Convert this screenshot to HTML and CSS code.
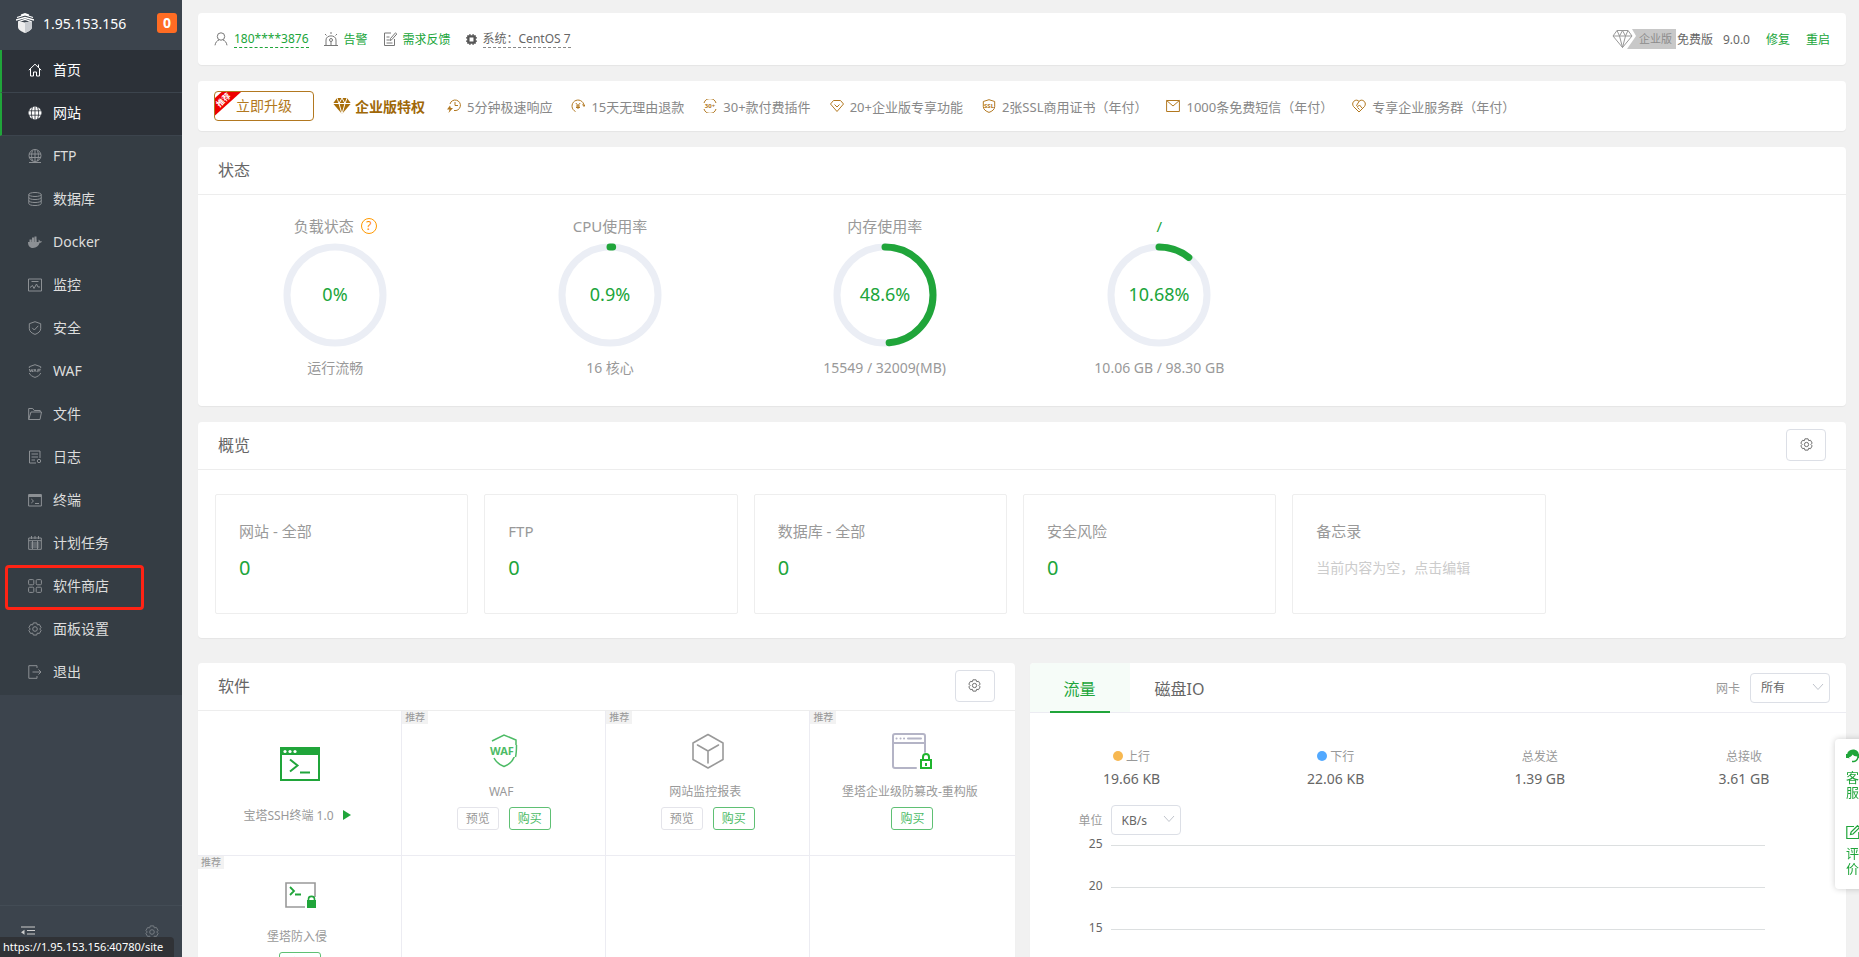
FILE: index.html
```html
<!DOCTYPE html>
<html lang="zh-CN">

<head>
    <meta charset="UTF-8">
    <meta name="viewport" content="width=device-width, initial-scale=1.0">
    <title>首页</title>
    <link rel="stylesheet" href="styles.css">
</head>

<body>

    <!-- Shared icons -->
    <svg class="sprite" aria-hidden="true">
        <symbol id="i-gear" viewBox="0 0 14 14">
            <path stroke-linejoin="round" d="M5.3.9h3.4l.65 2 2-.45 1.75 3L11.7 7l1.4 1.5-1.75 3-2-.45-.65 2H5.3l-.65-2-2 .45-1.75-3L2.3 7 .9 5.500l1.75-3 2 .45z" />
            <circle cx="7" cy="7" r="2.300" />
        </symbol>
        <symbol id="i-chevron" viewBox="0 0 12 12">
            <path d="M1 3l5 5.500L11 3" />
        </symbol>
    </svg>

    <div class="app">

        <aside class="sidebar">
            <header class="sidebar-header">
                <svg class="logo" viewBox="0 0 18 20">
                    <path fill="#eee" d="M2 8l7 1.500L16 8v6c0 3-3.500 4.500-7 6-3.500-1.500-7-3-7-6z" />
                    <path fill="#c9ccd0" d="M9 9.500L16 8v6c0 3-3.500 4.500-7 6z" />
                    <path fill="none" stroke="#fff" stroke-width="1.300" d="M1 4.500L9 2l8 2.500M0 7l9-2.500L18 7M5 2.200L9 .8l4 1.400M3 8.500l6-2 6 2" />
                </svg>
                <span class="server-ip">1.95.153.156</span>
                <span class="msg-count">0</span>
            </header>

            <nav class="menu">
                <a class="menu-item active" href="#">
                    <svg viewBox="0 0 14 14"><path d="M.8 7.200L7 1.200l6.200 6M2.500 6v7h3V9h3v4h3V6M10.500 4V1.500" /></svg>首页
                </a>
                <a class="menu-item active" href="#">
                    <svg viewBox="0 0 14 14"><circle cx="7" cy="7" r="6.500" fill="currentColor" stroke="none" /><path stroke="#2c3138" stroke-width=".8" d="M.5 4.800h13M.5 9.200h13M7 .5v13M4.500 1C3 5 3 9 4.500 13M9.500 1c1.500 4 1.500 8 0 12" /></svg>网站
                </a>
                <a class="menu-item" href="#">
                    <svg viewBox="0 0 14 14"><circle cx="7" cy="6.500" r="6" /><path d="M1 5h12M1 8.500h12M7 .5v12M4.500 1.500C3.300 5 3.300 8 4.500 12M9.500 1.500c1.200 3.500 1.200 6.500 0 10.500M1 13.500h12" /></svg>FTP
                </a>
                <a class="menu-item" href="#">
                    <svg viewBox="0 0 14 14"><ellipse cx="7" cy="2.500" rx="6.200" ry="2" /><path d="M.8 2.500v9c0 2.700 12.400 2.700 12.400 0v-9M.8 5.500c0 2.700 12.400 2.700 12.400 0M.8 8.500c0 2.700 12.400 2.700 12.400 0" /></svg>数据库
                </a>
                <a class="menu-item" href="#">
                    <svg viewBox="0 0 14 14"><path fill="currentColor" stroke="none" d="M0 7h10.500c.2-1-.1-1.700.3-2.500.8.500 1 1 1 1.700.8-.1 1.600 0 2.200.4-.5.900-1.200 1.200-2.300 1.200C10.500 11 8.500 13 5 13 1.500 13 0 10.500 0 7zM1.500 4.500h2.200v2.700H1.500zM4 4.500h2.200v2.700H4zM6.500 4.500h2.200v2.700H6.500zM4 2.500h2.200v2H4zM6.500 1.500h2v3h-2z" /></svg>Docker
                </a>
                <a class="menu-item" href="#">
                    <svg viewBox="0 0 14 14"><path d="M.5 1h13v12H.5zM3.500 3.500h7M2 9.500l2.500-2 1.500 3L8.500 6l1.500 3h2" /></svg>监控
                </a>
                <a class="menu-item" href="#">
                    <svg viewBox="0 0 14 14"><path d="M7 .7l5.700 2v5C12.700 10.500 10 12.300 7 13.400 4 12.300 1.300 10.500 1.300 7.700v-5zM4.200 6.800L6.300 9l4-4.200" /></svg>安全
                </a>
                <a class="menu-item" href="#">
                    <svg viewBox="0 0 14 14"><path d="M1.300 4V2.700L7 .7l5.700 2V4M1.300 9C2 11.300 4.500 12.500 7 13.400 9.500 12.500 12 11.300 12.700 9M1.300 5l1 3 1-2.500 1 2.500.8-3M5.800 8L7 5l1.200 3M9.800 8.200V5.300h3M9.800 6.800h2.500" /></svg>WAF
                </a>
                <a class="menu-item" href="#">
                    <svg viewBox="0 0 14 14"><path d="M.7 12.500v-11h4l1.500 2h6V5M.7 12.500h11.300L13.500 5H3z" /></svg>文件
                </a>
                <a class="menu-item" href="#">
                    <svg viewBox="0 0 14 14"><path d="M8 13H1.500V1h10.500v7M3.500 4h6.500M3.500 7h6.500M3.500 10H7" /><circle cx="11" cy="11" r="1.700" /></svg>日志
                </a>
                <a class="menu-item" href="#">
                    <svg viewBox="0 0 14 14"><path d="M.6 1.500h12.800v11.500H.6zM.6 2.500h12.800M.6 3.500h12.800M3.300 6l2.200 2-2.200 2M7 10.500h4" /></svg>终端
                </a>
                <a class="menu-item" href="#">
                    <svg viewBox="0 0 14 14"><path d="M.7 2h12.600v11.300H.7zM.7 4.700h12.600M3.500 0v3M7 0v3M10.500 0v3M2.500 7h9M2.500 9h9M2.500 11h9M4.500 5v8M9.500 5v8" /></svg>计划任务
                </a>
                <a class="menu-item marked" href="#">
                    <svg viewBox="0 0 14 14"><rect x=".6" y=".6" width="5.200" height="5.200" rx="1" /><rect x="8.200" y=".6" width="5.200" height="5.200" rx="1" /><rect x=".6" y="8.200" width="5.200" height="5.200" rx="1" /><rect x="8.200" y="8.200" width="5.200" height="5.200" rx="1" /></svg>软件商店
                </a>
                <a class="menu-item" href="#">
                    <svg><use href="#i-gear" /></svg>面板设置
                </a>
                <a class="menu-item" href="#">
                    <svg viewBox="0 0 14 14"><path d="M9 3V.7H.8v12.600H9V11M4.500 7h8.500M10.500 4.500L13 7l-2.500 2.500" /></svg>退出
                </a>
            </nav>

            <footer class="sidebar-footer">
                <svg class="fold" viewBox="0 0 14 12"><path d="M0 1h14M6 4.500h8M6 8h8M0 11.500h14" /><path fill="currentColor" stroke="none" d="M0 6.200l3.500-2.500v5z" /></svg>
                <svg class="foot-gear"><use href="#i-gear" /></svg>
            </footer>
            <div class="link-status">https://1.95.153.156:40780/site</div>
        </aside>

        <main class="main">

            <section class="card info-bar">
                <div class="info-group">
                    <span class="info-item">
                        <svg class="icon" viewBox="0 0 14 14"><circle cx="7" cy="4.500" r="3.700" /><path d="M1 13.300c.5-3 2-4.700 4-5.300M13 13.300c-.5-3-2-4.700-4-5.300" /></svg>
                        <a class="phone" href="#">180****3876</a>
                    </span>
                    <span class="info-item">
                        <svg class="icon" viewBox="0 0 14 14"><path d="M0 13.500h14M2 13V8c0-5.500 10-5.500 10 0v5M7 0v2M1 2l1.500 1.500M13 2l-1.500 1.500M7 9.500v3.500" /><circle cx="7" cy="8" r="1.500" /></svg>
                        <a href="#">告警</a>
                    </span>
                    <span class="info-item">
                        <svg class="icon" viewBox="0 0 14 14"><path d="M8 1H1.500v12.500h10V7M3.500 5h3M3.500 8h3M3.500 11h6M7 8.500l.5-2L12.500.8l1.300 1.200-5 5.700z" /></svg>
                        <a href="#">需求反馈</a>
                    </span>
                    <span class="info-item">
                        <svg class="icon chip" viewBox="0 0 14 14"><path d="M3 3h8v8H3z" stroke-width="3" /><path d="M5 0v14M9 0v14M0 5h14M0 9h14" stroke-width="1.500" stroke-dasharray="3 8" /></svg>
                        <span class="system">系统：CentOS 7</span>
                    </span>
                </div>
                <div class="version-group">
                    <span class="edition">
                        <svg viewBox="0 0 24 20"><path fill="#fff" stroke="none" d="M0 0h20l4 7-9 13H0z" /><path d="M5 1.500h11l4 5.500-9.500 11.500L1 7zM1 7h19M5 1.500L7.500 7l3 11.500L13.500 7 16 1.500M7.500 7l3-5.500 3 5.500" /></svg>
                        <span class="edition-name">企业版</span>
                    </span>
                    <span class="free">免费版</span>
                    <span class="version">9.0.0</span>
                    <a href="#">修复</a>
                    <a href="#">重启</a>
                </div>
            </section>

            <section class="card upgrade-bar">
                <button type="button" class="btn-upgrade"><span class="ribbon">推荐</span>立即升级</button>
                <strong class="perk-title">
                    <svg viewBox="0 0 18 16"><path fill="#a86d08" d="M4 0h10l4 5.500L9 16 0 5.500z" /><path fill="none" stroke="#fff" d="M0 5.500h18M4 0l2 5.500L9 16l3-10.500L14 0M6 5.500L9 0l3 5.500" /></svg>
                    企业版特权
                </strong>
                <span class="perk"><svg viewBox="0 0 14 14"><path d="M3 5a5.300 5.300 0 1 1 4 6.500M8 3v3.500h3" /><path fill="#b27820" stroke="none" d="M3 6.500L0 10.500h2.500L1.500 14l4.500-5H3.800z" /></svg>5分钟极速响应</span>
                <span class="perk"><svg viewBox="0 0 14 14"><path d="M4.500 12.500A6 6 0 1 1 13 6.500M11.500 5.500l1.500 2 1-2M4.800 4L7 6.500 9.200 4M7 6.500V10M5 7h4M5 8.500h4" /></svg>15天无理由退款</span>
                <span class="perk"><svg viewBox="0 0 14 14"><path d="M1 4a6.300 6.300 0 0 1 12 0M1 10a6.300 6.300 0 0 0 12 0" /><text x="7" y="9.300" text-anchor="middle">30+</text></svg>30+款付费插件</span>
                <span class="perk"><svg viewBox="0 0 14 14"><path d="M3.500 1.500h7L13.500 5 7 12.500.5 5zM4.500 5.500L7 8l2.500-2.500" /></svg>20+企业版专享功能</span>
                <span class="perk"><svg viewBox="0 0 14 14"><path d="M1.300 2.500L7 .7l5.700 1.800v5.200C12.700 10.500 10 12.300 7 13.400 4 12.300 1.300 10.500 1.300 7.700z" /><text x="7" y="8.800" text-anchor="middle">SSL</text></svg>2张SSL商用证书（年付）</span>
                <span class="perk"><svg viewBox="0 0 14 14"><path d="M.6 1.500h12.800v11H.6zM.6 1.500L7 7l6.400-5.500" /></svg>1000条免费短信（年付）</span>
                <span class="perk"><svg viewBox="0 0 14 14"><path d="M7 13L1.500 7.500C-1.500 3 4.500-1 7 2.500c2.500-3.500 8.500.5 5.500 5zM7 2.500L4.500 6.500c.5 1.500 2 1 3-.5l2.500 3M5.500 8.500l2 2" /></svg>专享企业服务群（年付）</span>
            </section>

            <section class="card">
                <header class="card-header"><h2>状态</h2></header>
                <div class="gauges">
                    <div class="gauge">
                        <h3>负载状态 <span class="help">?</span></h3>
                        <svg class="ring" viewBox="0 0 104 104">
                            <circle class="track" cx="52" cy="52" r="48" />
                            <text x="52" y="58">0%</text>
                        </svg>
                        <p>运行流畅</p>
                    </div>
                    <div class="gauge">
                        <h3>CPU使用率</h3>
                        <svg class="ring" viewBox="0 0 104 104">
                            <circle class="track" cx="52" cy="52" r="48" />
                            <circle class="bar" cx="52" cy="52" r="48" pathLength="100" stroke-dasharray="0.900 100" transform="rotate(-90 52 52)" />
                            <text x="52" y="58">0.9%</text>
                        </svg>
                        <p>16 核心</p>
                    </div>
                    <div class="gauge">
                        <h3>内存使用率</h3>
                        <svg class="ring" viewBox="0 0 104 104">
                            <circle class="track" cx="52" cy="52" r="48" />
                            <circle class="bar" cx="52" cy="52" r="48" pathLength="100" stroke-dasharray="48.600 100" transform="rotate(-90 52 52)" />
                            <text x="52" y="58">48.6%</text>
                        </svg>
                        <p>15549 / 32009(MB)</p>
                    </div>
                    <div class="gauge">
                        <h3 class="disk">/</h3>
                        <svg class="ring" viewBox="0 0 104 104">
                            <circle class="track" cx="52" cy="52" r="48" />
                            <circle class="bar" cx="52" cy="52" r="48" pathLength="100" stroke-dasharray="10.680 100" transform="rotate(-90 52 52)" />
                            <text x="52" y="58">10.68%</text>
                        </svg>
                        <p>10.06 GB / 98.30 GB</p>
                    </div>
                </div>
            </section>

            <section class="card">
                <header class="card-header">
                    <h2>概览</h2>
                    <button type="button" class="btn-gear" aria-label="概览设置"><svg><use href="#i-gear" /></svg></button>
                </header>
                <div class="overview">
                    <div class="overview-box"><h3>网站 - 全部</h3><a class="count" href="#">0</a></div>
                    <div class="overview-box"><h3>FTP</h3><a class="count" href="#">0</a></div>
                    <div class="overview-box"><h3>数据库 - 全部</h3><a class="count" href="#">0</a></div>
                    <div class="overview-box"><h3>安全风险</h3><a class="count" href="#">0</a></div>
                    <div class="overview-box"><h3>备忘录</h3><p class="memo">当前内容为空，点击编辑</p></div>
                </div>
            </section>

            <div class="columns">

                <section class="card">
                    <header class="card-header">
                        <h2>软件</h2>
                        <button type="button" class="btn-gear" aria-label="软件设置"><svg><use href="#i-gear" /></svg></button>
                    </header>
                    <div class="soft-grid">
                        <div class="soft installed">
                            <svg viewBox="0 0 40 34" width="40" height="34">
                                <rect x="1" y="1" width="38" height="32" fill="#fff" stroke="#20a53a" stroke-width="2" />
                                <path fill="#20a53a" d="M0 0h40v8H0z" />
                                <circle cx="5" cy="4.500" r="1.600" fill="#fff" /><circle cx="10" cy="4.500" r="1.600" fill="#fff" /><circle cx="15" cy="4.500" r="1.600" fill="#fff" />
                                <path fill="none" stroke="#20a53a" stroke-width="2" d="M10 12.500l7.500 6L10 24.500M20 25.500h10" />
                            </svg>
                            <p>宝塔SSH终端 1.0 <span class="play"></span></p>
                        </div>
                        <div class="soft">
                            <span class="tag">推荐</span>
                            <svg viewBox="0 0 36 36" width="36" height="36">
                                <path fill="none" stroke="#4dbb66" stroke-width="1.500" d="M6 8l12-6 12 5v7M8 25c2 4 6 7 10 8.500C25 31 30 26 30 14" />
                                <path fill="#fff" d="M3 12h29v12H3z" />
                                <path fill="none" stroke="#4dbb66" stroke-width="1.500" d="M30.500 12c0 5 0 8-1 12" />
                                <text class="waf-text" x="16" y="22">WAF</text>
                            </svg>
                            <p>WAF</p>
                            <div class="actions"><button type="button" class="btn-mini">预览</button><button type="button" class="btn-mini buy">购买</button></div>
                        </div>
                        <div class="soft">
                            <span class="tag">推荐</span>
                            <svg viewBox="0 0 36 36" width="36" height="36">
                                <path fill="none" stroke="#999" stroke-width="1.600" stroke-linejoin="round" stroke-linecap="round" d="M18 1.500l15 8.500v16.500L18 35 3 26.500V10zM7.500 12L18 18l10.500-6M18 18v12" />
                            </svg>
                            <p>网站监控报表</p>
                            <div class="actions"><button type="button" class="btn-mini">预览</button><button type="button" class="btn-mini buy">购买</button></div>
                        </div>
                        <div class="soft">
                            <span class="tag">推荐</span>
                            <svg viewBox="0 0 40 36" width="40" height="36">
                                <path fill="none" stroke="#b4b4c6" stroke-width="2" stroke-linecap="round" d="M24 35H3a2 2 0 0 1-2-2V3a2 2 0 0 1 2-2h28a2 2 0 0 1 2 2v16M1 10h32M16 5.500h13M4.500 5.500h.1M8.500 5.500h.1M12 5.500h.1" />
                                <path fill="#fff" stroke="#1fb52e" stroke-width="2" d="M29 27h10v8H29zM31 27v-3c0-4 6-4 6 0v3M34 30v3" />
                            </svg>
                            <p>堡塔企业级防篡改-重构版</p>
                            <div class="actions"><button type="button" class="btn-mini buy">购买</button></div>
                        </div>
                        <div class="soft">
                            <span class="tag">推荐</span>
                            <svg viewBox="0 0 36 36" width="36" height="36">
                                <path fill="none" stroke="#999" stroke-width="1.600" d="M23 29H4V5h29v14" />
                                <path fill="none" stroke="#20a53a" stroke-width="1.800" d="M8 9l4 4-4 4M13 16.500h6" />
                                <path fill="#20a53a" d="M25 22h9v8h-9z" /><path fill="none" stroke="#20a53a" stroke-width="1.600" d="M26.500 23v-2c0-3.500 6-3.500 6 0v2" />
                            </svg>
                            <p>堡塔防入侵</p>
                            <div class="actions"><button type="button" class="btn-mini buy">购买</button></div>
                        </div>
                        <div class="soft"></div>
                        <div class="soft"></div>
                        <div class="soft"></div>
                    </div>
                </section>

                <section class="card">
                    <header class="tabs">
                        <button type="button" class="tab current">流量</button>
                        <button type="button" class="tab">磁盘IO</button>
                        <div class="field nic">
                            <label for="nic">网卡</label>
                            <span class="select-wrap">
                                <select id="nic"><option>所有</option></select>
                                <svg><use href="#i-chevron" /></svg>
                            </span>
                        </div>
                    </header>
                    <div class="traffic">
                        <div class="stat"><h3><i class="dot up"></i>上行</h3><p>19.66 KB</p></div>
                        <div class="stat"><h3><i class="dot down"></i>下行</h3><p>22.06 KB</p></div>
                        <div class="stat"><h3>总发送</h3><p>1.39 GB</p></div>
                        <div class="stat"><h3>总接收</h3><p>3.61 GB</p></div>
                    </div>
                    <div class="field unit">
                        <label for="unit">单位</label>
                        <span class="select-wrap">
                            <select id="unit"><option>KB/s</option></select>
                            <svg><use href="#i-chevron" /></svg>
                        </span>
                    </div>
                    <div class="chart">
                        <div class="chart-row"><span>25</span></div>
                        <div class="chart-row"><span>20</span></div>
                        <div class="chart-row"><span>15</span></div>
                        <div class="chart-row"><span>10</span></div>
                        <div class="chart-row"><span>5</span></div>
                        <div class="chart-row"><span>0</span></div>
                    </div>
                </section>

            </div>
        </main>
    </div>

    <!-- Floating service entry, half tucked behind the window edge -->
    <div class="float-service">
        <a href="#">
            <svg viewBox="0 0 14 14"><path fill="currentColor" d="M7 .5c3.500 0 5.500 2.200 5.800 4.500H14v4h-1.500c-.5 2-2 3.700-4.500 4.300H6v-1.500h2c2-.5 3.200-2 3.300-4.300C9 7.500 7.500 6.800 6.500 5.500 6 7 4.500 8 3 8.300L3.500 10 2.500 9H0V5h1.200C1.500 2.700 3.500.5 7 .5z" /></svg>
            客服
        </a>
        <a href="#">
            <svg viewBox="0 0 14 14"><path fill="none" stroke="currentColor" stroke-width="1.200" d="M8 1.500H.8v12h12V7M4.500 9.500l.6-2.500L11.500.7l2 2L7 9z" /></svg>
            评价
        </a>
    </div>

</body>
</html>
```
FILE: styles.css
```css
:root {
    --green: #20a53a;
    --gold: #b27820;
    --border: #ececf2;
    --text: #666;
    --muted: #999;
}

* {
    box-sizing: border-box;
    margin: 0;
    padding: 0;
}

body {
    font-family: "Noto Sans", "Noto Sans CJK SC", sans-serif;
    font-size: 12px;
    color: var(--text);
    background-color: #f1f1f1;
}

a {
    color: var(--green);
    text-decoration: none;
}

h2, h3 {
    font-weight: normal;
}

button, select {
    font: inherit;
    color: inherit;
    background: #fff;
}

.sprite {
    display: none;
}

.app {
    display: flex;
    height: 100vh;
}

/* Sidebar */
.sidebar {
    position: relative;
    display: flex;
    flex-direction: column;
    width: 182px;
    flex-shrink: 0;
    background-color: #3c444d;
    color: #fff;
}

.sidebar-header {
    display: flex;
    align-items: center;
    height: 50px;
    padding: 0 5px 4px 16px;
    font-size: 14px;
}

.logo {
    width: 18px;
    height: 20px;
    margin-right: 9px;
}

.msg-count {
    width: 20px;
    margin-left: auto;
    border-radius: 3px;
    background-color: #ff6c23;
    font-weight: bold;
    line-height: 20px;
    text-align: center;
}

.menu {
    background-color: #353d44;
}

.menu-item {
    position: relative;
    display: flex;
    align-items: center;
    gap: 11px;
    height: 43px;
    padding: 0 0 3px 28px;
    color: #ddd;
    font-size: 14px;
    line-height: 20px;
}

.menu-item svg {
    width: 14px;
    height: 14px;
    fill: none;
    stroke: currentColor;
    color: #8c9094;
}

.menu-item.active {
    padding: 0 0 2px 26px;
    border-left: 2px solid var(--green);
    border-bottom: 1px solid #3c444d;
    background-color: #2c3138;
    color: #fff;
}

.menu-item.active svg {
    color: #fff;
}

.menu-item.marked::after {
    content: "";
    position: absolute;
    inset: -1px 38px -1px 5px;
    border: 3px solid #ff2314;
    border-radius: 4px;
}

.sidebar-footer {
    display: flex;
    justify-content: space-between;
    height: 52px;
    margin-top: auto;
    padding: 19px 23px 0 21px;
    border-top: 1px solid #434c55;
}

.sidebar-footer svg {
    width: 14px;
    height: 14px;
    fill: none;
    stroke: currentColor;
}

.fold {
    color: #ccc;
}

.foot-gear {
    color: #777d83;
}

.link-status {
    position: absolute;
    left: 0;
    bottom: 0;
    width: 174px;
    padding-left: 3px;
    border-top-right-radius: 4px;
    background-color: #303236;
    font-size: 11px;
    line-height: 20px;
}

/* Content */
.main {
    display: flex;
    flex-direction: column;
    gap: 16px;
    flex: 1;
    padding: 13px 13px 16px 16px;
    overflow-y: auto;
    scrollbar-width: none;
}

.card {
    border-radius: 4px;
    background-color: #fff;
    box-shadow: 0 1px 1px rgba(0, 0, 0, 0.05);
}

.card-header {
    display: flex;
    align-items: center;
    justify-content: space-between;
    height: 48px;
    padding: 0 20px 2px;
    border-bottom: 1px solid #ededed;
}

.card-header h2 {
    font-size: 16px;
    line-height: 22px;
}

.btn-gear {
    display: flex;
    align-items: center;
    justify-content: center;
    width: 40px;
    height: 32px;
    border: 1px solid #dcdfe6;
    border-radius: 4px;
}

.btn-gear svg {
    width: 13px;
    height: 13px;
    fill: none;
    stroke: currentColor;
}

.info-bar {
    display: flex;
    align-items: center;
    justify-content: space-between;
    height: 52px;
    flex-shrink: 0;
    padding: 0 16px;
}

.info-group {
    display: flex;
    gap: 15px;
}

.info-item {
    display: flex;
    align-items: center;
    gap: 6px;
}

.icon {
    width: 14px;
    height: 14px;
    fill: none;
    stroke: #777;
}

.icon.chip {
    width: 11px;
    height: 11px;
    stroke: #555;
}

.phone {
    border-bottom: 1px dashed var(--green);
}

.system {
    border-bottom: 1px dashed #888;
    line-height: 16px;
}

.version-group {
    display: flex;
    align-items: center;
    gap: 16px;
}

.edition {
    display: flex;
    width: 64px;
    height: 20px;
    margin-right: -16px;
    background-color: #c8c8c8;
    color: #8c8c8c;
    font-size: 11px;
    line-height: 20px;
}

.edition svg {
    width: 24px;
    height: 20px;
    fill: none;
    stroke: #999;
}

.edition-name {
    padding-left: 3px;
}

.free {
    margin: 0 -6px 0 1px;
}

/* Upgrade bar */
.upgrade-bar {
    display: flex;
    align-items: center;
    gap: 19px;
    height: 50px;
    flex-shrink: 0;
    padding: 0 16px;
    font-size: 13px;
    color: #888;
}

.btn-upgrade {
    position: relative;
    width: 100px;
    height: 30px;
    padding-bottom: 2px;
    border: 1px solid var(--gold);
    border-radius: 4px;
    color: var(--gold);
    font-size: 14px;
    overflow: hidden;
}

.ribbon {
    position: absolute;
    top: 1px;
    left: -19px;
    width: 54px;
    background-color: #e00;
    color: #fff;
    font-size: 8px;
    font-weight: bold;
    line-height: 13px;
    transform: rotate(-42deg);
}

.perk-title {
    display: flex;
    align-items: center;
    gap: 4px;
    margin-right: 3px;
    color: #a06808;
    font-size: 14px;
}

.perk-title svg {
    width: 18px;
    height: 16px;
}

.perk {
    display: flex;
    align-items: center;
    gap: 6px;
}

.perk svg {
    width: 14px;
    height: 14px;
    fill: none;
    stroke: var(--gold);
}

.perk text {
    fill: var(--gold);
    stroke: none;
    font-size: 6px;
    font-weight: bold;
}

/* Status */
.gauges {
    display: grid;
    grid-template-columns: repeat(6, 1fr);
    padding: 19px 0 26px;
}

.gauge {
    display: flex;
    flex-direction: column;
    align-items: center;
    color: var(--muted);
}

.gauge h3 {
    display: flex;
    align-items: center;
    gap: 7px;
    font-size: 15px;
    line-height: 24px;
}

.gauge .disk {
    color: var(--green);
}

.gauge p {
    font-size: 14px;
    line-height: 24px;
}

.help {
    width: 16px;
    height: 16px;
    border: 1px solid #f90;
    border-radius: 50%;
    color: #f80;
    font-size: 12px;
    line-height: 14px;
    text-align: center;
}

.ring {
    width: 104px;
    height: 104px;
    margin: 5px 0 9px;
    fill: none;
}

.ring .track {
    stroke: #ebeef5;
    stroke-width: 7px;
}

.ring .bar {
    stroke: var(--green);
    stroke-width: 7px;
    stroke-linecap: round;
}

.ring text {
    fill: var(--green);
    font-size: 18px;
    text-anchor: middle;
}

/* Overview */
.overview {
    display: grid;
    grid-template-columns: repeat(6, 1fr);
    gap: 16px;
    padding: 24px 31px 24px 17px;
}

.overview-box {
    height: 120px;
    padding: 24px 23px;
    border: 1px solid #eee;
    border-radius: 2px;
    color: var(--muted);
}

.overview-box h3 {
    margin-bottom: 13px;
    font-size: 15px;
    line-height: 24px;
}

.count {
    font-size: 20px;
    line-height: 24px;
}

.memo {
    color: #ccc;
    font-size: 14px;
    line-height: 24px;
}

/* Bottom columns */
.columns {
    display: grid;
    grid-template-columns: 1fr 1fr;
    gap: 15px;
    padding-top: 9px;
}

.soft-grid {
    display: grid;
    grid-template-columns: repeat(4, 1fr);
}

.soft {
    position: relative;
    display: flex;
    flex-direction: column;
    align-items: center;
    height: 145px;
    padding-top: 22px;
    border-right: 1px solid var(--border);
    border-bottom: 1px solid var(--border);
    color: var(--muted);
}

.soft:nth-child(4n) {
    border-right: none;
}

.soft p {
    margin-top: 14px;
    padding-right: 5px;
    line-height: 18px;
}

.soft.installed {
    padding-top: 36px;
}

.soft.installed p {
    margin-top: 26px;
}

.play {
    display: inline-block;
    margin-left: 6px;
    border-left: 8px solid var(--green);
    border-top: 5px solid transparent;
    border-bottom: 5px solid transparent;
}

.waf-text {
    fill: #4dbb66;
    font-size: 11px;
    font-weight: bold;
    text-anchor: middle;
}

.tag {
    position: absolute;
    top: 0;
    left: 0;
    padding: 0 3px;
    background-color: #f2f2f2;
    font-size: 10px;
    line-height: 13px;
}

.actions {
    display: flex;
    gap: 10px;
    margin-top: 6px;
}

.btn-mini {
    width: 42px;
    height: 23px;
    border: 1px solid #e4e4ea;
    border-radius: 3px;
    line-height: 20px;
}

.btn-mini.buy {
    border-color: #5fc074;
    color: #4dbb66;
}

/* Traffic */
.tabs {
    display: flex;
    height: 50px;
    border-bottom: 1px solid var(--border);
}

.tab {
    position: relative;
    width: 100px;
    border: none;
    font-size: 16px;
}

.tab.current {
    border-top-left-radius: 4px;
    background-color: #f6fcf8;
    color: var(--green);
}

.tab.current::after {
    content: "";
    position: absolute;
    inset: auto 20px -1px;
    height: 2px;
    background-color: var(--green);
}

.field {
    display: flex;
    align-items: center;
    color: var(--muted);
}

.select-wrap {
    position: relative;
    color: var(--text);
}

.select-wrap svg {
    position: absolute;
    top: 8px;
    right: 6px;
    width: 12px;
    height: 12px;
    fill: none;
    stroke: #c0c4cc;
    pointer-events: none;
}

.field select {
    appearance: none;
    width: 80px;
    height: 30px;
    padding: 0 10px;
    border: 1px solid #dcdfe6;
    border-radius: 4px;
}

.nic {
    gap: 10px;
    margin-left: auto;
    padding-right: 16px;
}

.unit {
    gap: 8px;
    padding: 15px 0 0 49px;
}

.unit select {
    width: 70px;
}

.traffic {
    display: grid;
    grid-template-columns: repeat(4, 1fr);
    padding-top: 33px;
    text-align: center;
}

.stat h3 {
    color: var(--muted);
    font-size: 12px;
    line-height: 22px;
}

.stat p {
    font-size: 14px;
    line-height: 22px;
}

.dot {
    display: inline-block;
    width: 10px;
    height: 10px;
    margin-right: 3px;
    border-radius: 50%;
}

.dot.up {
    background-color: #f7b851;
}

.dot.down {
    background-color: #52a9ff;
}

.chart {
    padding: 0 81px 20px 49px;
}

.chart-row {
    display: flex;
    align-items: flex-start;
    gap: 8px;
    height: 42px;
}

.chart-row span {
    width: 24px;
    line-height: 18px;
    text-align: right;
}

.chart-row::after {
    content: "";
    flex: 1;
    margin-top: 10px;
    border-top: 1px solid #dcdfe0;
}

/* Floating service */
.float-service {
    position: fixed;
    top: 739px;
    right: -11px;
    display: flex;
    flex-direction: column;
    gap: 25px;
    width: 35px;
    height: 150px;
    padding: 10px 8px 0 11px;
    border-radius: 4px;
    background-color: #fff;
    box-shadow: 0 0 6px rgba(0, 0, 0, 0.2);
}

.float-service a {
    font-size: 13px;
    line-height: 15px;
}

.float-service svg {
    display: block;
    width: 14px;
    height: 14px;
    margin-bottom: 7px;
}
```
